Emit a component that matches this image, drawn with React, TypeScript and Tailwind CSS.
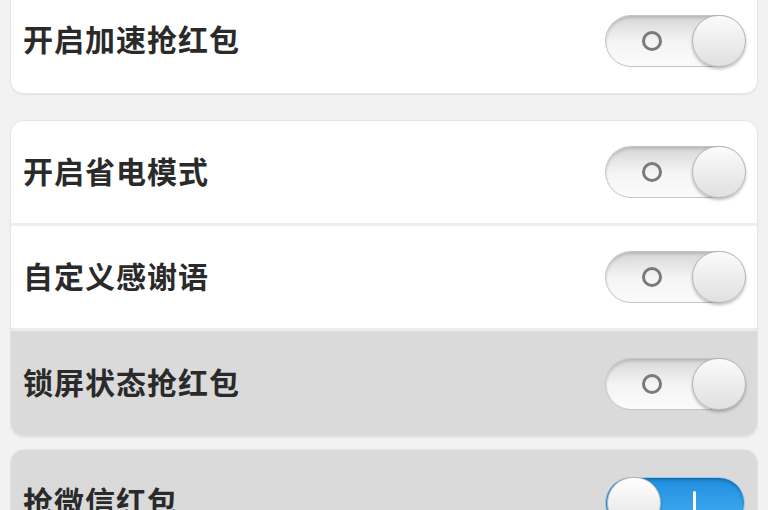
import React from "react";

type Row = { label: string; on?: boolean; pressed?: boolean };

function Toggle({ on }: { on?: boolean }) {
  if (on) {
    return (
      <div className="flex items-center w-[140px] h-[52px] rounded-full border border-[#9cc8e8] bg-gradient-to-b from-[#1f8ee0] to-[#45b2f2] shadow-[inset_0_2px_3px_rgba(0,0,0,0.25)] shrink-0">
        <div className="w-[54px] h-[52px] -my-[1px] ml-[1px] rounded-full border border-[#b8b8b8] bg-gradient-to-b from-[#ffffff] to-[#e2e2e2] shadow-[0_2px_3px_rgba(0,0,0,0.25)] shrink-0" />
        <div className="ml-[32px] w-[3px] h-[24px] bg-white rounded-sm" />
      </div>
    );
  }
  return (
    <div className="flex items-center pl-[36px] w-[140px] h-[52px] rounded-full border border-[#c4c4c4] bg-gradient-to-b from-[#d6d6d6] via-[#f4f4f4] to-[#fbfbfb] shadow-[inset_0_2px_3px_rgba(0,0,0,0.15)] shrink-0">
      <div className="w-[20px] h-[20px] rounded-full border-[3px] border-[#7a7a7a] shrink-0" />
      <div className="ml-auto -mr-[2px] w-[54px] h-[52px] -my-[1px] rounded-full border border-[#b4b4b4] bg-gradient-to-b from-[#fbfbfb] to-[#e0e0e0] shadow-[0_2px_3px_rgba(0,0,0,0.25)] shrink-0" />
    </div>
  );
}

function SettingRow({ row, last }: { row: Row; last?: boolean }) {
  return (
    <div
      className={`flex items-center justify-between h-[105px] pl-[12px] pr-[12px] ${
        row.pressed ? "bg-[#dadada]" : "bg-white"
      } ${last ? "" : "border-b-[3px] border-[#ededed]"}`}
    >
      <span className="text-[30px] font-bold text-[#2a2a2a] tracking-[1px] [font-family:'Liberation_Serif','Noto_Sans_CJK_SC',serif]">
        {row.label}
      </span>
      <Toggle on={row.on} />
    </div>
  );
}

function Card({ rows, className = "" }: { rows: Row[]; className?: string }) {
  return (
    <div
      className={`mx-[10px] rounded-[14px] overflow-hidden border border-[#e4e4e4] shadow-[0_1px_2px_rgba(0,0,0,0.06)] ${className}`}
    >
      {rows.map((r, i) => (
        <SettingRow key={r.label} row={r} last={i === rows.length - 1} />
      ))}
    </div>
  );
}

export default function App() {
  return (
    <div className="w-[768px] h-[510px] overflow-hidden bg-[#f2f2f2]">
      <Card className="-mt-[13px]" rows={[{ label: "开启加速抢红包" }]} />
      <Card
        className="mt-[26px]"
        rows={[
          { label: "开启省电模式" },
          { label: "自定义感谢语" },
          { label: "锁屏状态抢红包", pressed: true },
        ]}
      />
      <Card className="mt-[12px]" rows={[{ label: "抢微信红包", on: true, pressed: true }]} />
    </div>
  );
}
